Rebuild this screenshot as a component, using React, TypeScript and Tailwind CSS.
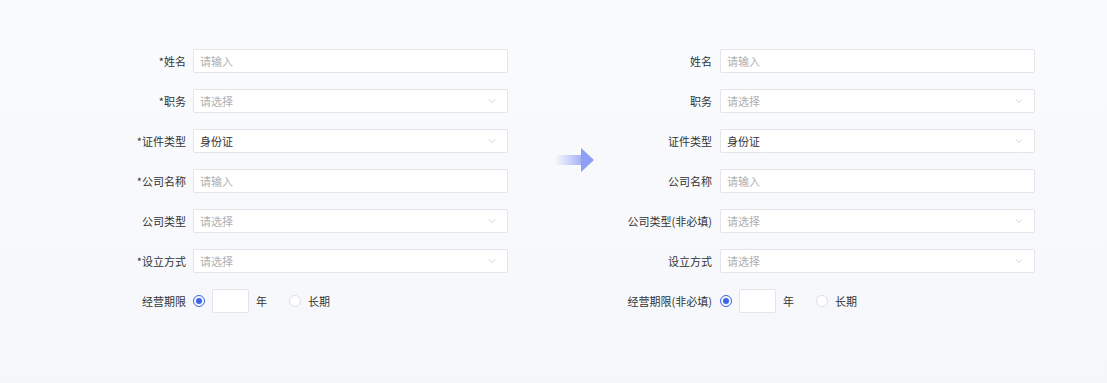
import { ChevronDown } from "lucide-react";

type Field = { label: string; kind: "input" | "select"; value?: string };

const leftFields: Field[] = [
  { label: "*姓名", kind: "input" },
  { label: "*职务", kind: "select" },
  { label: "*证件类型", kind: "select", value: "身份证" },
  { label: "*公司名称", kind: "input" },
  { label: "公司类型", kind: "select" },
  { label: "*设立方式", kind: "select" },
];

const rightFields: Field[] = [
  { label: "姓名", kind: "input" },
  { label: "职务", kind: "select" },
  { label: "证件类型", kind: "select", value: "身份证" },
  { label: "公司名称", kind: "input" },
  { label: "公司类型(非必填)", kind: "select" },
  { label: "设立方式", kind: "select" },
];

function Box({ field }: { field: Field }) {
  return (
    <div className="flex h-6 w-[315px] items-center justify-between rounded-[2px] border border-[#e3e5ea] bg-white pl-[6px] pr-[9px]">
      <span className={field.value ? "text-[#333]" : "text-[#b0b0b0]"}>
        {field.value ?? (field.kind === "input" ? "请输入" : "请选择")}
      </span>
      {field.kind === "select" && <ChevronDown size={12} strokeWidth={1.1} className="text-[#aeb2ba]" />}
    </div>
  );
}

function Form({ fields, last, labelW }: { fields: Field[]; last: string; labelW: string }) {
  return (
    <div className="flex flex-col gap-4">
      {fields.map((f) => (
        <div key={f.label} className="flex items-center">
          <div className={`${labelW} shrink-0 pr-[7px] text-right text-[#333]`}>{f.label}</div>
          <Box field={f} />
        </div>
      ))}
      <div className="flex items-center">
        <div className={`${labelW} shrink-0 pr-[7px] text-right text-[#333]`}>{last}</div>
        <span className="flex h-3 w-3 items-center justify-center rounded-full border border-[#3d63e6]">
          <span className="h-[6px] w-[6px] rounded-full bg-[#3d63e6]" />
        </span>
        <div className="ml-[7px] h-6 w-[37px] rounded-[2px] border border-[#e3e5ea] bg-white" />
        <span className="ml-[7px] text-[#333]">年</span>
        <span className="ml-[22px] h-3 w-3 rounded-full border border-[#dcdfe6] bg-white" />
        <span className="ml-[7px] text-[#333]">长期</span>
      </div>
    </div>
  );
}

function Arrow() {
  return (
    <svg width="40" height="24" viewBox="0 0 40 24" className="mt-[99px]">
      <defs>
        <linearGradient id="shaft" x1="0" x2="1" y1="0" y2="0">
          <stop offset="0" stopColor="#a9b5f7" stopOpacity="0" />
          <stop offset="1" stopColor="#a3aff7" stopOpacity="1" />
        </linearGradient>
      </defs>
      <rect x="0" y="7" width="27" height="10" fill="url(#shaft)" />
      <path d="M26 0 L39 12 L26 24 Z" fill="#8f9ff6" />
    </svg>
  );
}

export default function App() {
  return (
    <div
      className="flex h-[383px] w-[1107px] items-start bg-gradient-to-b from-[#fafbfd] to-[#f6f7fa] pl-[120px] pt-[49px] text-[11px] leading-none"
      style={{ fontFamily: '"Noto Sans CJK SC", "Noto Sans", sans-serif' }}
    >
      <Form fields={leftFields} last="经营期限" labelW="w-[73px]" />
      <div className="ml-[47px]">
        <Arrow />
      </div>
      <div className="ml-[5px]">
        <Form fields={rightFields} last="经营期限(非必填)" labelW="w-[120px] pr-[8px]" />
      </div>
    </div>
  );
}
